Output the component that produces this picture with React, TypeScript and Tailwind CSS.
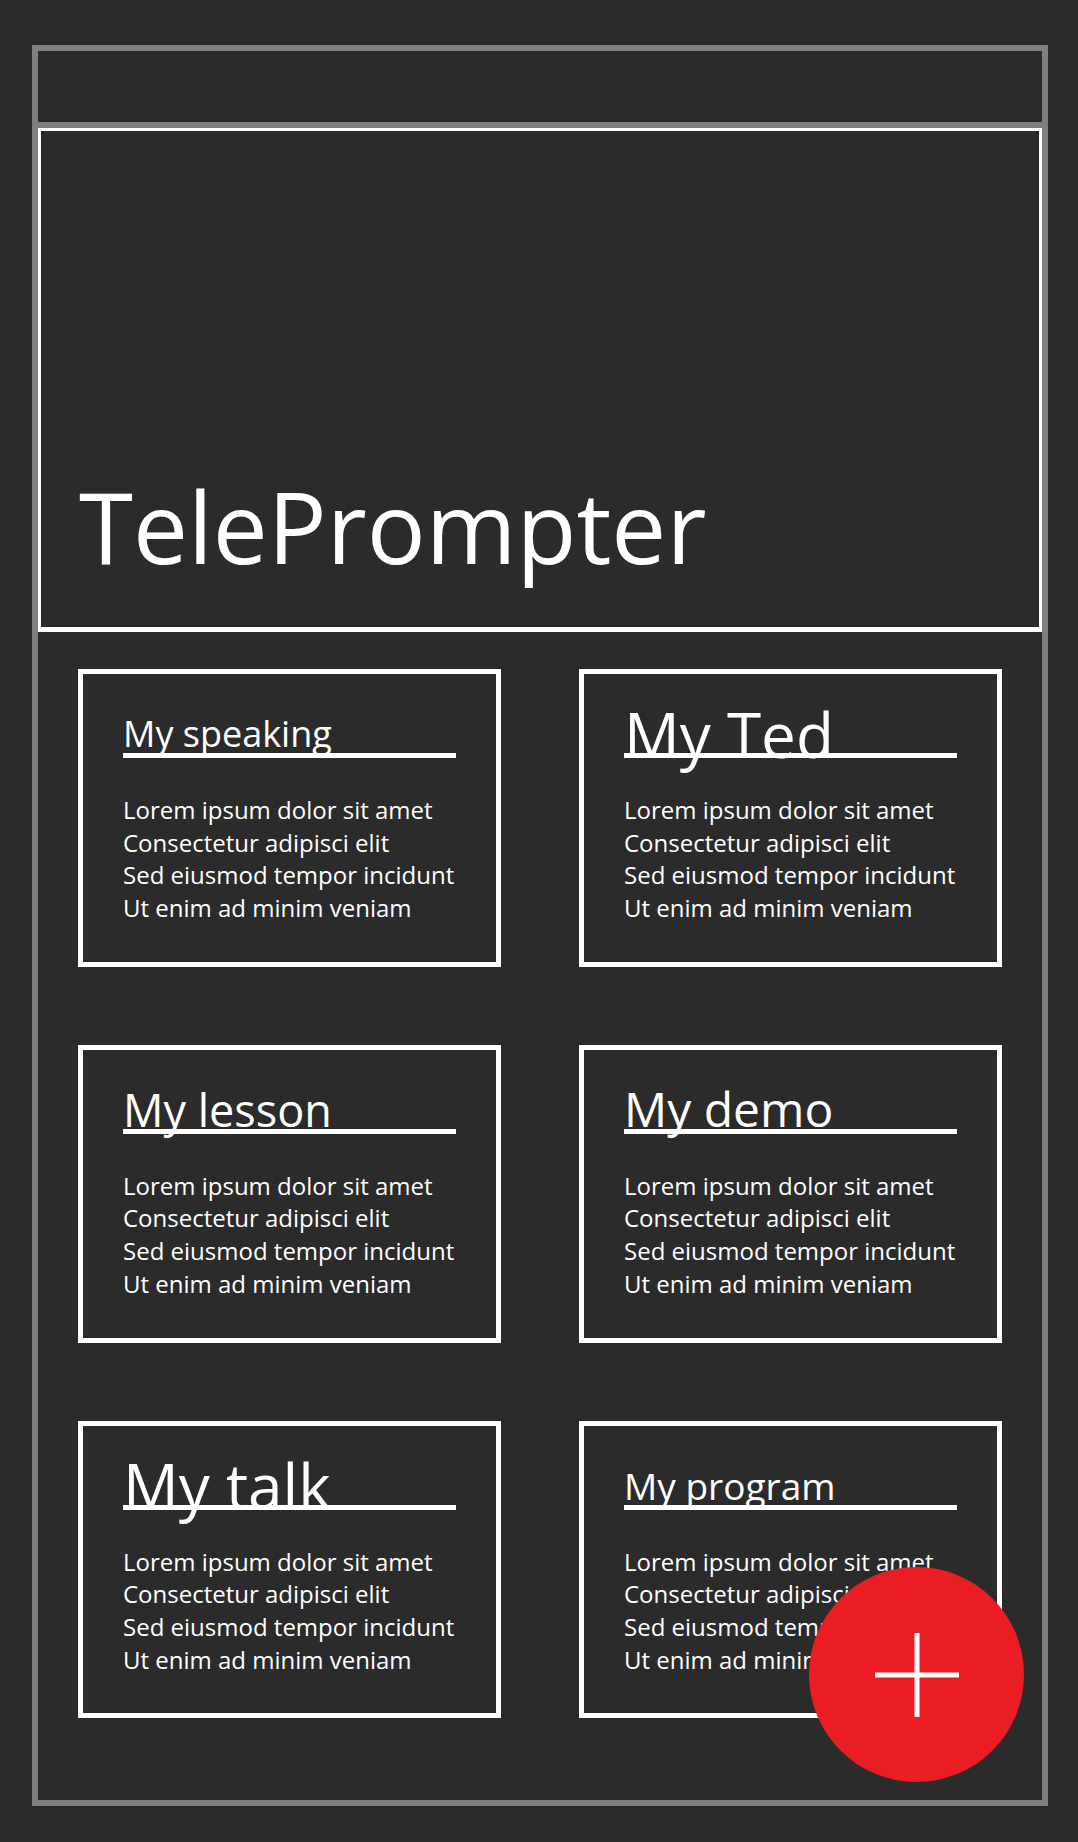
import React from "react";

type Script = {
  title: string;
  size: string;
};

const scripts: Script[] = [
  { title: "My speaking", size: "text-[36px]" },
  { title: "My Ted", size: "text-[62px]" },
  { title: "My lesson", size: "text-[45px]" },
  { title: "My demo", size: "text-[48px]" },
  { title: "My talk", size: "text-[62px]" },
  { title: "My program", size: "text-[37px]" },
];

const lines = [
  "Lorem ipsum dolor sit amet",
  "Consectetur adipisci elit",
  "Sed eiusmod tempor incidunt",
  "Ut enim ad minim veniam",
];

const ScriptCard: React.FC<Script> = ({ title, size }) => {
  return (
    <div className="border-[5px] border-white px-[40px] pt-[40px] pb-[37px]">
      <div className="h-[44px] border-b-[5px] border-white flex items-center">
        <span className={`${size} leading-none whitespace-nowrap`}>{title}</span>
      </div>
      <div className="mt-[36px] text-[24px] leading-[1.362]">
        {lines.map((line) => (
          <div key={line}>{line}</div>
        ))}
      </div>
    </div>
  );
};

const App: React.FC = () => {
  return (
    <div className="min-h-[1842px] bg-[#2b2b2b] pt-[45px] pl-[32px] pr-[30px] pb-[36px] text-white font-['Open_Sans',sans-serif]">
      <div className="relative h-[1761px] border-[6px] border-[#7f7f7f] flex flex-col">
        {/* empty toolbar */}
        <div className="h-[77px] border-b-[6px] border-[#7f7f7f]" />

        <header className="h-[504px] border-x-[3px] border-t-[3px] border-b-[5px] border-white flex flex-col justify-end pl-[38px] pb-[52px]">
          <h1 className="text-[98px] leading-none font-normal">TelePrompter</h1>
        </header>

        <main className="grid grid-cols-2 gap-[78px] px-[40px] pt-[37px]">
          {scripts.map((s) => (
            <ScriptCard key={s.title} {...s} />
          ))}
        </main>

        <button className="absolute right-[18px] bottom-[18px] w-[215px] h-[215px] rounded-full bg-[#ea1d25] flex items-center justify-center">
          <svg width="84" height="84" viewBox="0 0 84 84">
            <line x1="0" y1="42" x2="84" y2="42" stroke="white" strokeWidth="5" />
            <line x1="42" y1="0" x2="42" y2="84" stroke="white" strokeWidth="5" />
          </svg>
        </button>
      </div>
    </div>
  );
};

export default App;
